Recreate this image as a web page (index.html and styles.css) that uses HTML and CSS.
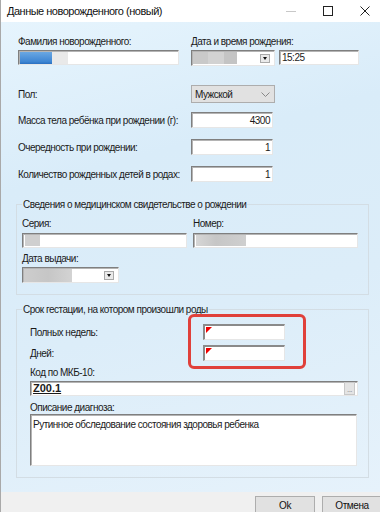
FILE: index.html
```html
<!DOCTYPE html>
<html lang="ru">
<head>
    <meta charset="UTF-8">
    <meta name="viewport" content="width=device-width, initial-scale=1.0">
    <title>Данные новорожденного (новый)</title>
    <link rel="stylesheet" href="styles.css">
</head>
<body>
<div class="window">
    <div class="titlebar">
        <span class="title">Данные новорожденного (новый)</span>
        <div class="win-buttons">
            <svg width="12" height="12" viewBox="0 0 12 12"><path d="M1 6.5h10" stroke="#c8c8c8" stroke-width="1"/></svg>
            <svg width="12" height="12" viewBox="0 0 12 12"><rect x="1.5" y="1.5" width="9" height="9" fill="none" stroke="#222" stroke-width="1"/></svg>
            <svg width="12" height="12" viewBox="0 0 12 12"><path d="M1.5 1.5l9 9M10.5 1.5l-9 9" stroke="#222" stroke-width="1"/></svg>
        </div>
    </div>

    <div class="form">
        <div class="main">
            <!-- ФИО и дата рождения -->
            <div class="top-row">
                <div class="col-surname">
                    <div class="label">Фамилия новорожденного:</div>
                    <div class="input w161">
                        <span class="blur blue"></span><span class="blur light"></span>
                    </div>
                </div>
                <div class="col-date">
                    <div class="label">Дата и время рождения:</div>
                    <div class="date-time">
                        <div class="input picker w84">
                            <span class="blur g1"></span><span class="blur g2"></span><span class="blur g3"></span>
                            <span class="drop"></span>
                        </div>
                        <div class="input w80">15:25</div>
                    </div>
                </div>
            </div>

            <div class="row r-sex">
                <div class="label lw">Пол:</div>
                <div class="combo">Мужской
                    <svg class="chev" width="9" height="5" viewBox="0 0 9 5"><path d="M0.5 0.5l4 4 4-4" fill="none" stroke="#888" stroke-width="1"/></svg>
                </div>
            </div>
            <div class="row r-mass">
                <div class="label lw">Масса тела ребёнка при рождении (г):</div>
                <div class="input num">4300</div>
            </div>
            <div class="row r-next">
                <div class="label lw">Очередность при рождении:</div>
                <div class="input num">1</div>
            </div>
            <div class="row r-next">
                <div class="label lw">Количество рожденных детей в родах:</div>
                <div class="input num">1</div>
            </div>
        </div>

        <!-- Свидетельство -->
        <fieldset class="group g-cert">
            <legend>Сведения о медицинском свидетельстве о рождении</legend>
            <div class="cert-row">
                <div class="cert-col">
                    <div class="label">Серия:</div>
                    <div class="input"><span class="blur s1"></span></div>
                </div>
                <div class="cert-col">
                    <div class="label">Номер:</div>
                    <div class="input"><span class="blur n1"></span></div>
                </div>
            </div>
            <div class="label issue">Дата выдачи:</div>
            <div class="input picker w97">
                <span class="blur d1"></span>
                <span class="drop"></span>
            </div>
        </fieldset>

        <!-- Срок гестации -->
        <fieldset class="group g-gest">
            <legend>Срок гестации, на котором произошли роды</legend>
            <div class="inner">
                <div class="gest-rows">
                    <div class="row">
                        <div class="label lw">Полных недель:</div>
                        <div class="input num req"></div>
                    </div>
                    <div class="row r-day">
                        <div class="label lw">Дней:</div>
                        <div class="input num req"></div>
                    </div>
                    <div class="highlight"></div>
                </div>
                <div class="label mkb-label">Код по МКБ-10:</div>
                <div class="input mkb"><span class="code">Z00.1</span><span class="dots">...</span></div>
                <div class="label desc-label">Описание диагноза:</div>
                <div class="input desc">Рутинное обследование состояния здоровья ребенка</div>
            </div>
        </fieldset>
    </div>

    <div class="footer">
        <button class="btn ok">Ok</button>
        <button class="btn cancel">Отмена</button>
    </div>
</div>
</body>
</html>
```

FILE: styles.css
```css
html, body {
    margin: 0;
    padding: 0;
}
body {
    width: 380px;
    height: 512px;
    overflow: hidden;
    font-family: "Liberation Sans", Arial, sans-serif;
    font-size: 10px;
    letter-spacing: -0.5px;
    color: #1a1a1a;
}

.window {
    width: 380px;
    height: 512px;
    box-sizing: border-box;
    border-left: 1px solid #a9a9a9;
    background: #fff;
    display: flex;
    flex-direction: column;
}

/* Заголовок окна */
.titlebar {
    height: 22px;
    flex: none;
    display: flex;
    align-items: center;
    padding-left: 6px;
    background: #fff;
}
.title {
    font-size: 11px;
    letter-spacing: -0.5px;
    color: #111;
}
.win-buttons {
    margin-left: auto;
    display: flex;
    gap: 25px;
    padding-right: 9px;
}

/* Основная область */
.form {
    height: 470px;
    flex: none;
    box-sizing: border-box;
    padding: 13px 0 0 15px;
    background: linear-gradient(165deg, #e6f4fd 0%, #d9ecf9 30%, #dcedf9 60%, #e6f2fb 100%);
}
.main {
    padding-left: 2px;
}
.label {
    line-height: 13px;
    white-space: nowrap;
}
.lw {
    width: 173px;
    flex: none;
}

.input {
    box-sizing: border-box;
    height: 15px;
    background: #fff;
    border-top: 1px solid #7f7f7f;
    border-left: 1px solid #7f7f7f;
    border-right: 1px solid #e6e6e6;
    border-bottom: 1px solid #e6e6e6;
    box-shadow: inset 1px 1px 0 #b4b4b4;
    line-height: 13px;
    padding: 0 2px;
    display: flex;
    align-items: center;
    white-space: nowrap;
}
.w161 { width: 161px; padding: 0 1px; }
.w84 { width: 84px; }
.w80 { width: 80px; }
.w97 { width: 97px; }

.blur {
    display: inline-block;
    height: 12px;
}
.blue { width: 32px; background: linear-gradient(#6aa7e3, #3e86d3 80%, #2a6fc0); }
.light { width: 16px; background: #e9e9e9; }
.g1 { width: 15px; background: #c9c9c9; }
.g2 { width: 16px; background: #d2d2d2; }
.g3 { width: 13px; background: #c4c4c4; }
.s1 { width: 15px; background: #cfcfcf; height: 11px; }
.n1 { width: 50px; background: linear-gradient(90deg, #d6d6d6, #c6c6c6 40%, #cfcfcf); height: 11px; }
.d1 { width: 48px; background: linear-gradient(90deg, #cdcdcd, #c6c6c6 50%, #d3d3d3); height: 13px; }

.picker {
    height: 16px;
    padding: 0 1px;
}
.drop {
    width: 10px;
    height: 9px;
    margin-left: auto;
    margin-right: 3px;
    box-sizing: border-box;
    border: 1px solid #a9a9a9;
    background: #eaeaea;
    position: relative;
}
.drop::after {
    content: "";
    position: absolute;
    left: 2px;
    top: 2px;
    border-left: 2px solid transparent;
    border-right: 2px solid transparent;
    border-top: 3px solid #111;
}

.top-row {
    display: flex;
}
.col-surname {
    width: 173px;
}
.col-surname .label,
.col-date .label {
    margin-bottom: 2px;
}
.date-time {
    display: flex;
    gap: 4px;
}

.row {
    display: flex;
    align-items: center;
}
.r-sex { margin-top: 19px; }
.r-mass { margin-top: 9px; }
.r-next { margin-top: 11px; }

.combo {
    box-sizing: border-box;
    width: 84px;
    height: 18px;
    background: #e1e1e1;
    border: 1px solid #adadad;
    padding: 0 3px;
    display: flex;
    align-items: center;
}
.chev {
    margin-left: auto;
    margin-right: 1px;
}

.num {
    width: 82px;
    height: 16px;
    justify-content: flex-end;
}

/* Группы */
.group {
    width: 353px;
    box-sizing: border-box;
    margin: 0;
    border: 1px solid #d3dde4;
    padding: 6px 5px 11px 5px;
    min-width: 0;
}
.group legend {
    padding: 0 1px;
    line-height: 13px;
    color: #1a1a1a;
}
.g-cert {
    margin-top: 16px;
}
.cert-row {
    display: flex;
    gap: 6px;
}
.cert-col {
    width: 165px;
}
.cert-col .label {
    margin-bottom: 3px;
}
.cert-col .input {
    width: 165px;
}
.issue {
    margin-top: 4px;
    margin-bottom: 2px;
}

.g-gest {
    margin-top: 8px;
    padding-top: 8px;
}
.inner {
    padding-left: 8px;
}
.gest-rows {
    position: relative;
}
.r-day {
    margin-top: 5px;
}
.req {
    position: relative;
    box-shadow: none;
    border-top: 2px solid #8a8a8a;
    border-left: 2px solid #8a8a8a;
}
.req::before {
    content: "";
    position: absolute;
    left: 1px;
    top: 1px;
    border-top: 6px solid #f00000;
    border-right: 6px solid transparent;
}
.highlight {
    position: absolute;
    left: 158px;
    top: -10px;
    width: 118px;
    height: 55px;
    box-sizing: border-box;
    border: 3px solid #e0403a;
    border-radius: 6px;
}
.mkb-label {
    margin-top: 5px;
    margin-bottom: 2px;
}
.mkb {
    width: 328px;
    padding-left: 2px;
}
.code {
    font-weight: bold;
    text-decoration: underline;
    font-size: 11px;
    letter-spacing: 0;
}
.dots {
    margin-left: auto;
    width: 9px;
    height: 11px;
    background: #e4e4e4;
    border: 1px solid #c8c8c8;
    color: #888;
    font-size: 8px;
    line-height: 13px;
    text-align: center;
}
.desc-label {
    margin-top: 5px;
}
.desc {
    width: 327px;
    height: 52px;
    align-items: flex-start;
    padding-top: 3px;
}

/* Нижняя панель */
.footer {
    flex: 1;
    background: #f0f0f0;
    display: flex;
    justify-content: flex-end;
    align-items: flex-start;
    gap: 7px;
    padding-top: 4px;
    overflow: hidden;
}
.btn {
    font-family: "Liberation Sans", Arial, sans-serif;
    font-size: 10px;
    letter-spacing: -0.4px;
    color: #111;
    background: #e1e1e1;
    border: 1px solid #adadad;
    height: 22px;
    padding: 0 0 4px 0;
    margin: 0;
}
.ok { width: 60px; }
.cancel { width: 60px; margin-right: -2px; }
```
